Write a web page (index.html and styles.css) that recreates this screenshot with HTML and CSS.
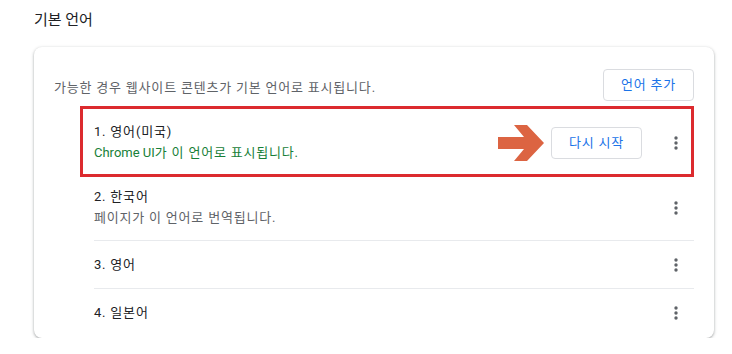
FILE: index.html
```html
<!DOCTYPE html>
<html lang="ko">
<head>
<meta charset="utf-8">
<link rel="stylesheet" href="styles.css">
</head>
<body>
<div class="page">
  <h2 class="title">기본 언어</h2>
  <div class="card">
    <div class="header">
      <div class="desc">가능한 경우 웹사이트 콘텐츠가 기본 언어로 표시됩니다.</div>
      <button class="btn">언어 추가</button>
    </div>
    <div class="list">
      <div class="row two first">
        <div class="texts">
          <div class="primary">1. 영어(미국)</div>
          <div class="secondary green"><span class="latin">Chrome UI</span>가 이 언어로 표시됩니다.</div>
        </div>
        <svg class="arrow" width="47" height="36" viewBox="0 0 47 36"><polygon points="0,12 26,12 16,0 29,0 46,18 29,36 16,36 26,24 0,24" fill="#dc6442"/></svg>
        <button class="btn">다시 시작</button>
        <span class="kebab"><svg width="20" height="20" viewBox="0 0 20 20"><circle cx="10" cy="5" r="1.7"/><circle cx="10" cy="10" r="1.7"/><circle cx="10" cy="15" r="1.7"/></svg></span>
        <div class="redbox"></div>
      </div>
      <div class="row two second">
        <div class="texts">
          <div class="primary">2. 한국어</div>
          <div class="secondary">페이지가 이 언어로 번역됩니다.</div>
        </div>
        <span class="kebab"><svg width="20" height="20" viewBox="0 0 20 20"><circle cx="10" cy="5" r="1.7"/><circle cx="10" cy="10" r="1.7"/><circle cx="10" cy="15" r="1.7"/></svg></span>
      </div>
      <div class="row">
        <div class="texts">
          <div class="primary">3. 영어</div>
        </div>
        <span class="kebab"><svg width="20" height="20" viewBox="0 0 20 20"><circle cx="10" cy="5" r="1.7"/><circle cx="10" cy="10" r="1.7"/><circle cx="10" cy="15" r="1.7"/></svg></span>
      </div>
      <div class="row last">
        <div class="texts">
          <div class="primary">4. 일본어</div>
        </div>
        <span class="kebab"><svg width="20" height="20" viewBox="0 0 20 20"><circle cx="10" cy="5" r="1.7"/><circle cx="10" cy="10" r="1.7"/><circle cx="10" cy="15" r="1.7"/></svg></span>
      </div>
    </div>
  </div>
</div>
</body>
</html>
```
FILE: styles.css
```css
* { box-sizing: border-box; }
body {
  margin: 0;
  background: #fff;
  font-family: Roboto, "Noto Sans CJK KR", sans-serif;
  color: #202124;
}
.page {
  padding: 8px 0 0 34px;
  width: 714px;
}
.title {
  margin: 0 0 15px;
  font-size: 15px;
  font-weight: 400;
  line-height: 24px;
  height: 24px;
  color: #202124;
}
.card {
  background: #fff;
  border-radius: 8px;
  box-shadow: 0 1px 2px rgba(60,64,67,0.3), 0 1px 3px 1px rgba(60,64,67,0.15);
  height: 291px;
}
.header {
  display: flex;
  justify-content: space-between;
  align-items: flex-start;
  padding: 22px 20px 0;
}
.desc {
  font-size: 13px;
  line-height: 20px;
  color: #5f6368;
  margin-top: 9px;
  letter-spacing: 0.8px;
}
.btn {
  height: 32px;
  padding: 0 17px;
  border: 1px solid #dadce0;
  border-radius: 4px;
  background: #fff;
  color: #1a73e8;
  font-family: Roboto, "Noto Sans CJK KR", sans-serif;
  font-size: 13px;
  font-weight: 400;
  line-height: 30px;
  letter-spacing: 0.8px;
}
.list {
  margin-top: 10px;
  padding: 0 20px 0 60px;
}
.row {
  position: relative;
  display: flex;
  align-items: center;
  min-height: 48px;
  border-bottom: 1px solid #e8eaed;
}
.row.two { min-height: 64px; }
.row.second { min-height: 66px; }
.row.last { border-bottom: none; min-height: 47px; }
.texts { flex: 1; }
.primary {
  font-size: 13px;
  line-height: 20px;
  color: #202124;
  letter-spacing: 0.8px;
}
.secondary {
  font-size: 13px;
  line-height: 20px;
  color: #5f6368;
  letter-spacing: 0.8px;
}
.latin { letter-spacing: 0; }
.secondary.green { color: #188038; }
.row.two .secondary { margin-top: 1px; }
.arrow { margin-right: 6px; display: block; }
.kebab {
  width: 36px;
  height: 36px;
  margin-left: 16px;
  display: flex;
  align-items: center;
  justify-content: center;
  fill: #5f6368;
}
.redbox {
  position: absolute;
  left: -14px;
  top: -5px;
  right: 0;
  bottom: -3px;
  border: 3px solid #dc2a2e;
  pointer-events: none;
}
```
